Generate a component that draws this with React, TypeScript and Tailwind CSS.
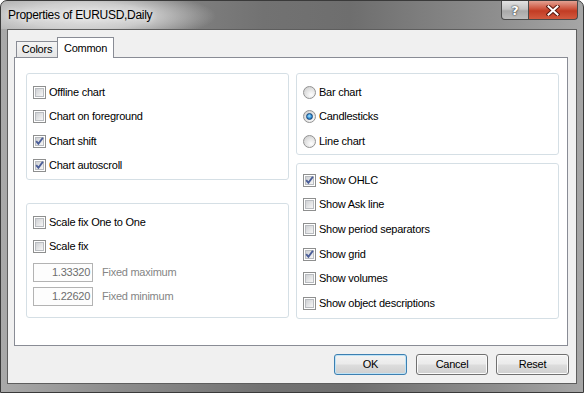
import React from "react";

function CheckBox({ checked }: { checked?: boolean }) {
  return (
    <span className="relative w-[13px] h-[13px] shrink-0 border border-[#8e8f8f] bg-white p-px">
      <span className="block w-full h-full border border-[#b9bcc0] bg-[linear-gradient(135deg,#cfd1d4,#f6f6f6)]" />
      {checked && (
        <svg className="absolute left-0 top-0" width="11" height="11" viewBox="0 0 11 11">
          <path d="M2.2 5.2 L4.4 7.8 L8.9 1.8" fill="none" stroke="#4a5d98" strokeWidth="1.9" strokeLinejoin="miter" />
        </svg>
      )}
    </span>
  );
}

function Radio({ checked }: { checked?: boolean }) {
  return (
    <span className="w-[13px] h-[13px] shrink-0 rounded-full border border-[#929292] bg-[radial-gradient(circle_at_65%_70%,#fefefe,#e6e6e6_45%,#c9c9c9)] flex items-center justify-center">
      {checked && (
        <span className="w-[7px] h-[7px] rounded-full border border-[#17467a] bg-[radial-gradient(circle_at_45%_40%,#a9e6ff,#3b97dc_50%,#0f4f90)]" />
      )}
    </span>
  );
}

function CheckRow({ label, checked, h }: { label: string; checked?: boolean; h: string }) {
  return (
    <div className={`flex items-center gap-[3px] ${h}`}>
      <CheckBox checked={checked} />
      <span className="leading-[13px]">{label}</span>
    </div>
  );
}

function RadioRow({ label, checked }: { label: string; checked?: boolean }) {
  return (
    <div className="flex items-center gap-[3px] h-[24.5px]">
      <Radio checked={checked} />
      <span className="leading-[13px]">{label}</span>
    </div>
  );
}

function Field({ value, label }: { value: string; label: string }) {
  return (
    <div className="flex items-center gap-[9px]">
      <div className="w-[60px] h-[19px] border border-[#b3b3b3] bg-[#fdfdfd] flex items-center justify-end pr-[2px] text-[#6d6d6d]">
        {value}
      </div>
      <span className="text-[#858585]">{label}</span>
    </div>
  );
}

function Btn({ children, def, w }: { children: React.ReactNode; def?: boolean; w: string }) {
  return (
    <div
      className={`h-[21px] rounded-[3px] border flex items-center justify-center bg-[linear-gradient(to_bottom,#f3f3f3_0%,#ebebeb_48%,#dddddd_52%,#cfcfcf_100%)] ${
        def ? "border-[#3c7fb1] shadow-[inset_0_0_0_1px_#bfe3f6]" : "border-[#707070] shadow-[inset_0_0_0_1px_#fbfbfb]"
      } ${w}`}
    >
      {children}
    </div>
  );
}

export default function App() {
  return (
    <div className="w-[584px] h-[393px] flex flex-col border border-[#3a3a3a] rounded-t-[7px] overflow-hidden bg-[linear-gradient(to_right,#a9a9a9,#8c8c8c_20%,#727272_45%,#6e6e6e_60%,#8e8e8e_85%,#a6a6a6)] font-['Liberation_Sans',Arial,sans-serif] text-[11px] tracking-[-0.25px] text-black">
      {/* title bar */}
      <div className="h-[28px] shrink-0 flex items-start bg-[radial-gradient(ellipse_130px_26px_at_85px_15px,rgba(232,232,232,0.97),rgba(225,225,225,0.75)_50%,rgba(220,220,220,0))]">
        <div className="pl-[7px] pt-[7px] text-[12px] tracking-[-0.3px] leading-[15px] text-black [text-shadow:0_0_6px_#ffffff]">
          Properties of EURUSD,Daily
        </div>
        <div className="ml-auto mr-[5px] flex h-[19px]">
          <div className="w-[28px] h-full border border-t-0 border-[#4a4a4a] rounded-bl-[4px] bg-[linear-gradient(to_bottom,#e2e2e2,#c4c4c4_45%,#a9a9a9_55%,#bdbdbd)] flex items-center justify-center font-['DejaVu_Sans',sans-serif] font-bold text-[13px] leading-none text-white [text-shadow:0_0_1px_#333,0_0_2px_#333]">
            ?
          </div>
          <div className="w-[49px] h-full border border-t-0 border-l-0 border-[#4a4a4a] rounded-br-[4px] bg-[linear-gradient(to_bottom,#e3a192,#cf5a44_40%,#c23c24_55%,#d25a3f)] flex items-center justify-center">
            <svg width="14" height="11" viewBox="0 0 14 11">
              <path d="M2.5 1.5 L11.5 9.5 M11.5 1.5 L2.5 9.5" stroke="#5a1a10" strokeWidth="4" strokeLinecap="square" />
              <path d="M2.5 1.5 L11.5 9.5 M11.5 1.5 L2.5 9.5" stroke="#ffffff" strokeWidth="2" strokeLinecap="square" />
            </svg>
          </div>
        </div>
      </div>

      {/* client area */}
      <div className="flex-1 mx-[6px] mb-[8px] border border-[#5e5e5e] bg-[#f0f0f0] flex flex-col">
        {/* tabs */}
        <div className="h-[27px] shrink-0 ml-[6px] pl-[2px] flex items-end">
          <div className="w-[41px] h-[16px] border border-r-0 border-b-0 border-[#898c95] bg-[linear-gradient(to_bottom,#f4f4f4,#e6e6e6)] flex items-center justify-center">
            Colors
          </div>
          <div className="relative z-10 -mb-px w-[57px] h-[21px] border border-b-0 border-[#898c95] bg-white flex items-center justify-center">
            Common
          </div>
        </div>

        {/* panel */}
        <div className="ml-[6px] mr-[8px] h-[289px] shrink-0 border border-[#898c95] bg-white flex gap-[7px] pl-[11px] pr-[8px] pt-[15px]">
          <div className="w-[263px] flex flex-col">
            <div className="h-[107px] border border-[#d5dfe5] rounded-[3px] pt-[6px] pl-[6px]">
              <CheckRow h="h-[24.5px]" label="Offline chart" />
              <CheckRow h="h-[24.5px]" label="Chart on foreground" />
              <CheckRow h="h-[24.5px]" label="Chart shift" checked />
              <CheckRow h="h-[24.5px]" label="Chart autoscroll" checked />
            </div>
            <div className="h-[115px] mt-[23px] border border-[#d5dfe5] rounded-[3px] pt-[6px] pl-[6px]">
              <CheckRow h="h-[24.5px]" label="Scale fix One to One" />
              <CheckRow h="h-[24.5px]" label="Scale fix" />
              <div className="mt-[4px] flex flex-col gap-[5px]">
                <Field value="1.33320" label="Fixed maximum" />
                <Field value="1.22620" label="Fixed minimum" />
              </div>
            </div>
          </div>
          <div className="w-[263px] flex flex-col">
            <div className="h-[82px] border border-[#d5dfe5] rounded-[3px] pt-[6px] pl-[6px]">
              <RadioRow label="Bar chart" />
              <RadioRow label="Candlesticks" checked />
              <RadioRow label="Line chart" />
            </div>
            <div className="h-[156px] mt-[8px] border border-[#d5dfe5] rounded-[3px] pt-[4px] pl-[6px]">
              <CheckRow h="h-[24.6px]" label="Show OHLC" checked />
              <CheckRow h="h-[24.6px]" label="Show Ask line" />
              <CheckRow h="h-[24.6px]" label="Show period separators" />
              <CheckRow h="h-[24.6px]" label="Show grid" checked />
              <CheckRow h="h-[24.6px]" label="Show volumes" />
              <CheckRow h="h-[24.6px]" label="Show object descriptions" />
            </div>
          </div>
        </div>

        {/* buttons */}
        <div className="mt-[8px] pr-[7px] flex justify-end">
          <Btn def w="w-[73px]">OK</Btn>
          <div className="ml-[9px]">
            <Btn w="w-[72px]">Cancel</Btn>
          </div>
          <div className="ml-[8px]">
            <Btn w="w-[73px]">Reset</Btn>
          </div>
        </div>
      </div>
    </div>
  );
}
